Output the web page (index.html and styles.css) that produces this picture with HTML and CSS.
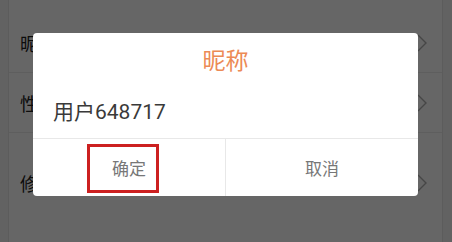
FILE: index.html
```html
<!DOCTYPE html>
<html lang="zh">
<head>
<meta charset="utf-8">
<title>昵称</title>
<link rel="stylesheet" href="styles.css">
</head>
<body>
<div class="page">
  <div class="list">
    <div class="row r1"><span class="label">昵称</span><svg class="chev" viewBox="0 0 10 18"><path d="M1 1 L9 9 L1 17" /></svg></div>
    <div class="row r2"><span class="label">性别</span><svg class="chev" viewBox="0 0 10 18"><path d="M1 1 L9 9 L1 17" /></svg></div>
    <div class="row r3"><span class="label">修改密码</span><svg class="chev" viewBox="0 0 10 18"><path d="M1 1 L9 9 L1 17" /></svg></div>
  </div>
</div>
<div class="overlay"></div>
<div class="dialog">
  <div class="title">昵称</div>
  <div class="content">用户648717</div>
  <div class="buttons">
    <div class="btn">确定</div>
    <div class="btn">取消</div>
  </div>
  <div class="highlight"></div>
</div>
</body>
</html>
```
FILE: styles.css
```css
html, body {
  margin: 0;
  padding: 0;
}
body {
  width: 452px;
  height: 242px;
  overflow: hidden;
  background: #f4f4f4;
  font-family: Roboto, "Noto Sans CJK SC", "Noto Sans", sans-serif;
}
.page {
  margin-left: 8px;
  width: 435px;
  height: 242px;
  background: #ffffff;
  border-left: 1px solid #e6e6e6;
  border-right: 1px solid #e6e6e6;
  box-sizing: border-box;
}
.list {
  padding-top: 14px;
}
.row {
  display: flex;
  align-items: center;
  justify-content: space-between;
  padding-left: 11px;
  padding-right: 15px;
  border-bottom: 1px solid #ebebeb;
  box-sizing: border-box;
}
.r1 { height: 59px; }
.r2 { height: 60px; }
.r3 { height: 100px; border-bottom: none; }
.label {
  font-size: 18px;
  color: #222;
}
.chev {
  width: 10px;
  height: 18px;
  fill: none;
  stroke: #b0b0b0;
  stroke-width: 1.4;
}
.overlay {
  position: fixed;
  inset: 0;
  background: rgba(0, 0, 0, 0.6);
}
.dialog {
  position: absolute;
  left: 33px;
  top: 33px;
  width: 385px;
  background: #fff;
  border-radius: 4px;
}
.title {
  padding-top: 14px;
  font-size: 23px;
  line-height: 30px;
  color: #ec8a55;
  text-align: center;
}
.content {
  margin-top: 21px;
  padding: 0 20px 12px;
  font-size: 21px;
  line-height: 28px;
  color: #3a3a3a;
}
.buttons {
  display: flex;
  height: 57px;
  border-top: 1px solid #e8e8e8;
}
.btn {
  flex: 1;
  display: flex;
  align-items: center;
  justify-content: center;
  font-size: 17px;
  color: #777;
}
.btn + .btn {
  border-left: 1px solid #e8e8e8;
}
.highlight {
  position: absolute;
  left: 54px;
  top: 111px;
  width: 72px;
  height: 49px;
  box-sizing: border-box;
  border: 3px solid #cc2020;
}
```
